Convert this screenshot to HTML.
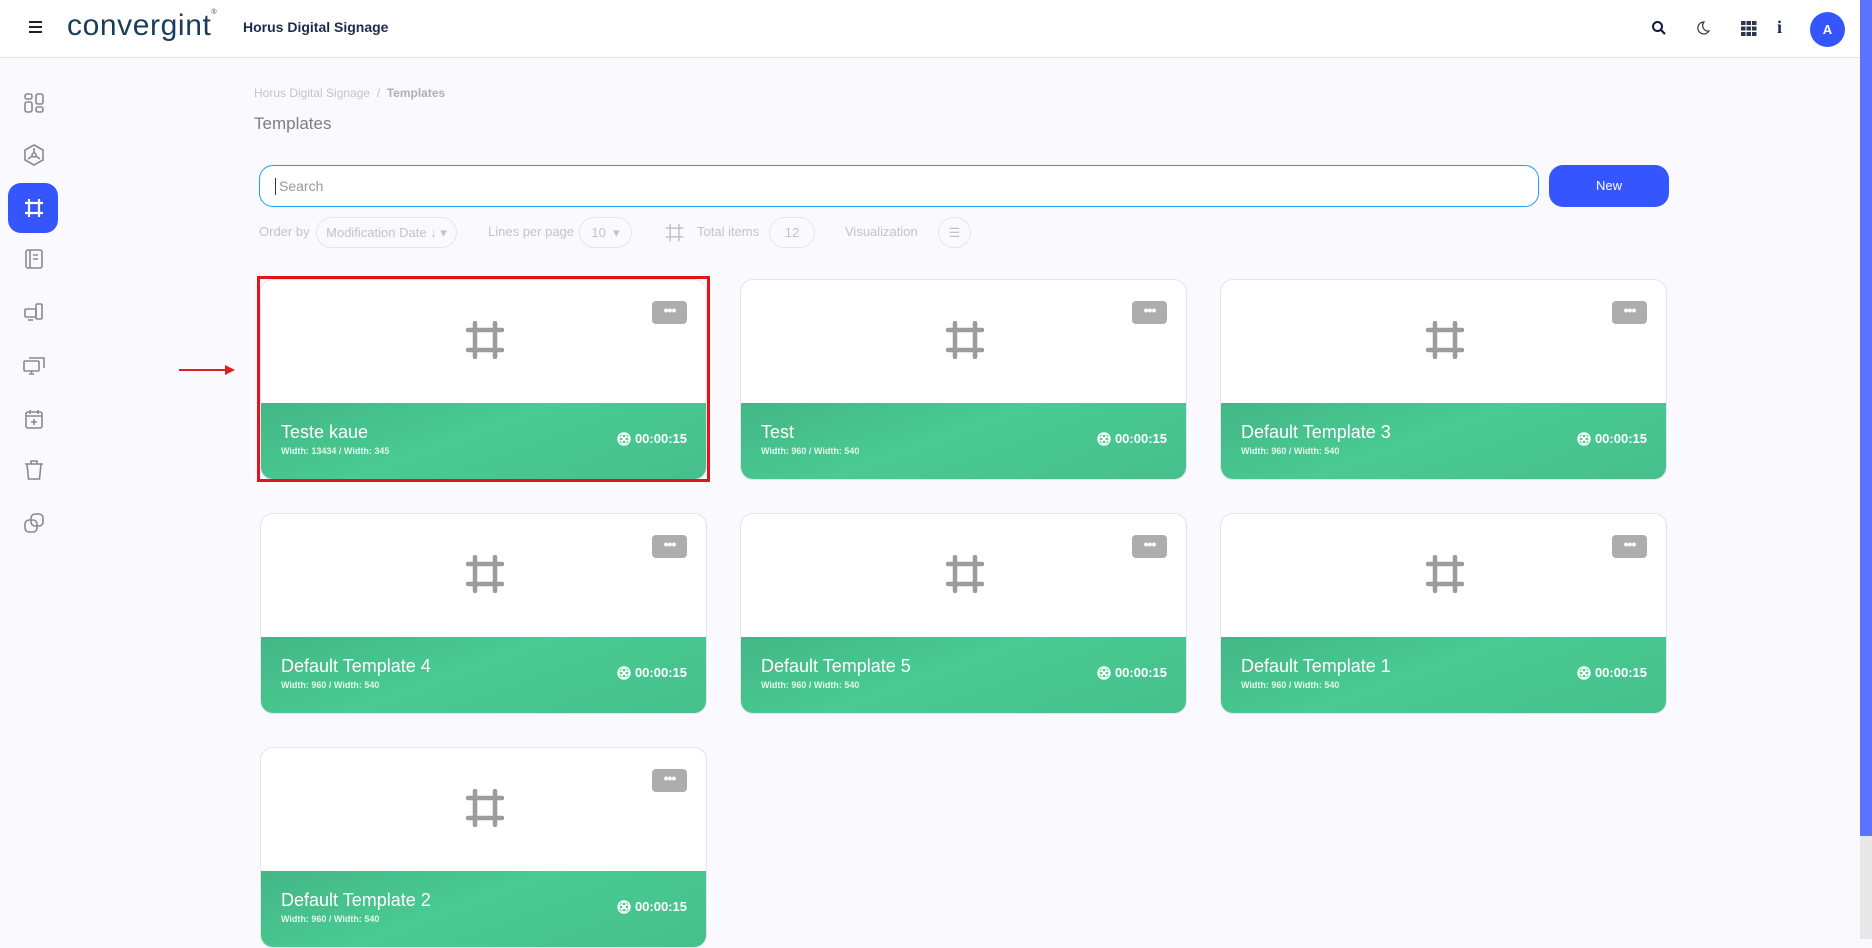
<!DOCTYPE html>
<html><head><meta charset="utf-8"><style>
*{box-sizing:border-box;margin:0;padding:0}
body{width:1872px;height:939px;overflow:hidden;background:#f9f9fe;font-family:"Liberation Sans",Arial,sans-serif;position:relative}
.hdr{position:absolute;left:0;top:0;width:1860px;height:58px;background:#fff;border-bottom:1px solid #e6e6ec}
.side{position:absolute;left:0;top:58px;width:68px;height:881px;background:#f9f9fe}
.sb{position:absolute;right:0;top:0;width:12px;height:939px;background:#e8e8e8}
.sb i{position:absolute;left:0;top:0;width:12px;height:836px;background:#5b73ff}
.ic{position:absolute;left:22px;width:24px;height:24px}
.card{position:absolute;width:447px;height:201px;background:#fff;border:1px solid #e4e4ea;border-radius:13px;overflow:hidden}
.card .g{position:absolute;left:0;bottom:0;width:100%;height:76px;background:linear-gradient(160deg,#43b685 0%,#49cb93 45%,#46c08c 100%)}
.card .t{position:absolute;left:20px;top:19px;color:#fff;font-size:18px}
.card .s{position:absolute;left:20px;top:43px;color:#e3f7ec;font-size:9px;font-weight:bold}
.card .d{position:absolute;right:19px;top:28px;color:#fff;font-size:13px;font-weight:bold;display:flex;align-items:center;gap:4px}
.card .m{position:absolute;right:19px;top:21px;width:35px;height:23px;background:#adadad;border-radius:4px;color:#fff;text-align:center;font-size:14px;line-height:19px;font-weight:bold;letter-spacing:-1px}
.card svg.cr{position:absolute;left:205px;top:41px}
.lbl{position:absolute;top:224px;color:#c4c4c8;font-size:13px}
.pill{position:absolute;top:217px;height:31px;border:1px solid #e6e6ea;border-radius:16px;color:#c4c4c8;font-size:13px;line-height:29px;text-align:center}
</style></head><body>
<div class="hdr">
 <div style="position:absolute;left:29px;top:21px;width:13px;height:2px;background:#222;box-shadow:0 5px 0 #222,0 10px 0 #222"></div>
 <div style="position:absolute;left:67px;top:9px;font-size:30px;color:#1b3d5a;letter-spacing:0.6px">convergint<span style="font-size:7px;vertical-align:top">®</span></div>
 <div style="position:absolute;left:243px;top:19px;font-size:14px;font-weight:bold;color:#1c2b4a">Horus Digital Signage</div>
 <svg style="position:absolute;left:1651px;top:20px" width="16" height="16" viewBox="0 0 16 16"><circle cx="6.5" cy="6.5" r="4.5" fill="none" stroke="#111a3a" stroke-width="2"/><path d="M10 10l4 4" stroke="#111a3a" stroke-width="2.2"/></svg>
 <svg style="position:absolute;left:1695px;top:20px" width="16" height="16" viewBox="0 0 16 16"><path d="M9 2a6 6 0 1 0 5 9A5.5 5.5 0 0 1 9 2z" fill="none" stroke="#333" stroke-width="1.2"/></svg>
 <svg style="position:absolute;left:1741px;top:21px" width="16" height="15" viewBox="0 0 16 15"><g fill="#2a3550"><rect x="0" y="0" width="4.5" height="4"/><rect x="5.5" y="0" width="4.5" height="4"/><rect x="11" y="0" width="4.5" height="4"/><rect x="0" y="5.5" width="4.5" height="4"/><rect x="5.5" y="5.5" width="4.5" height="4"/><rect x="11" y="5.5" width="4.5" height="4"/><rect x="0" y="11" width="4.5" height="4"/><rect x="5.5" y="11" width="4.5" height="4"/><rect x="11" y="11" width="4.5" height="4"/></g></svg>
 <div style="position:absolute;left:1777px;top:17px;font-size:18px;font-weight:bold;color:#1c2b4a;font-family:'Liberation Serif',serif">i</div>
 <div style="position:absolute;left:1810px;top:12px;width:35px;height:35px;border-radius:50%;background:#3555ff;color:#fff;font-weight:bold;font-size:13px;text-align:center;line-height:35px">A</div>
</div>
<div class="side">
 <svg class="ic" style="top:33px" viewBox="0 0 24 24" fill="none" stroke="#8a8a8a" stroke-width="1.6"><rect x="3" y="3" width="7" height="5" rx="2"/><rect x="3" y="11" width="7" height="10" rx="2"/><rect x="14" y="3" width="7" height="10" rx="2"/><rect x="14" y="16" width="7" height="5" rx="2"/></svg>
 <svg class="ic" style="top:85px" viewBox="0 0 24 24" fill="none" stroke="#8a8a8a" stroke-width="1.6"><path d="M12 2l9 5v10l-9 5-9-5V7z"/><circle cx="12" cy="12" r="2"/><path d="M12 10V5M10.3 13l-4.3 3M13.7 13l4.3 3"/></svg>
 <div style="position:absolute;left:8px;top:125px;width:50px;height:50px;border-radius:13px;background:#3555ff"></div>
 <svg class="ic" style="top:138px" viewBox="0 0 24 24" fill="none" stroke="#fff" stroke-width="2.2"><path d="M7 3v18M17 3v18M3 7h18M3 17h18"/></svg>
 <svg class="ic" style="top:189px" viewBox="0 0 24 24" fill="none" stroke="#8a8a8a" stroke-width="1.6"><rect x="4" y="3" width="16" height="18" rx="2"/><path d="M8 3v18M11 8h5M11 12h5"/></svg>
 <svg class="ic" style="top:243px" viewBox="0 0 24 24" fill="none" stroke="#8a8a8a" stroke-width="1.6"><rect x="3" y="8" width="11" height="8" rx="1"/><rect x="14" y="3" width="6" height="15" rx="1"/><path d="M6 19h5"/></svg>
 <svg class="ic" style="top:295px" viewBox="0 0 24 24" fill="none" stroke="#8a8a8a" stroke-width="1.6"><rect x="2" y="8" width="15" height="10" rx="1"/><path d="M7 5h15v10M7 21h5M9.5 18v3"/></svg>
 <svg class="ic" style="top:349px" viewBox="0 0 24 24" fill="none" stroke="#8a8a8a" stroke-width="1.6"><rect x="4" y="5" width="16" height="16" rx="2"/><path d="M4 9h16M8 3v4M16 3v4M12 12v6M9 15h6"/></svg>
 <svg class="ic" style="top:400px" viewBox="0 0 24 24" fill="none" stroke="#8a8a8a" stroke-width="1.6"><path d="M3 6h18M9 6V3h6v3M5 6l1.5 15h11L19 6"/></svg>
 <svg class="ic" style="top:453px" viewBox="0 0 24 24" fill="none" stroke="#8a8a8a" stroke-width="1.6"><rect x="9" y="3" width="12" height="12" rx="4"/><rect x="3" y="9" width="12" height="12" rx="4"/></svg>
</div>
<div class="sb"><i></i></div>

<div style="position:absolute;left:254px;top:86px;font-size:12px;color:#c4c4c8">Horus Digital Signage &nbsp;/&nbsp; <b style="color:#b0b0b4">Templates</b></div>
<div style="position:absolute;left:254px;top:114px;font-size:17px;color:#7d7d82">Templates</div>
<div style="position:absolute;left:259px;top:165px;width:1280px;height:42px;border:1px solid #1e9ef5;border-radius:14px;background:#fff"><span style="position:absolute;left:15px;top:12px;width:1px;height:17px;background:#333"></span><span style="position:absolute;left:19px;top:12px;font-size:14px;color:#9a9a9e">Search</span></div>
<div style="position:absolute;left:1549px;top:165px;width:120px;height:42px;border-radius:14px;background:#3555ff;color:#fff;font-size:13px;text-align:center;line-height:42px">New</div>

<div class="lbl" style="left:259px">Order by</div>
<div class="pill" style="left:316px;width:141px">Modification Date ↓ ▾</div>
<div class="lbl" style="left:488px">Lines per page</div>
<div class="pill" style="left:579px;width:53px">10 &nbsp;▾</div>
<svg style="position:absolute;left:664px;top:222px" width="21" height="21" viewBox="0 0 24 24" fill="none" stroke="#c4c4c8" stroke-width="1.8"><path d="M7 2v20M17 2v20M2 7h20M2 17h20"/></svg>
<div class="lbl" style="left:697px">Total items</div>
<div class="pill" style="left:769px;width:46px">12</div>
<div class="lbl" style="left:845px">Visualization</div>
<div class="pill" style="left:938px;width:33px">☰</div>

<div style="position:absolute;left:179px;top:369px;width:48px;height:2px;background:#e02020"></div>
<div style="position:absolute;left:225px;top:365px;border-left:10px solid #e02020;border-top:5px solid transparent;border-bottom:5px solid transparent"></div>

<div id="cards"></div>
<div style="position:absolute;left:257px;top:276px;width:453px;height:206px;border:3px solid #e3141b;z-index:5"></div>
<script>
var d=[["Teste kaue","Width: 13434 / Width: 345"],["Test","Width: 960 / Width: 540"],["Default Template 3","Width: 960 / Width: 540"],["Default Template 4","Width: 960 / Width: 540"],["Default Template 5","Width: 960 / Width: 540"],["Default Template 1","Width: 960 / Width: 540"],["Default Template 2","Width: 960 / Width: 540"]];
var h="";d.forEach(function(c,i){var x=260+(i%3)*480,y=279+Math.floor(i/3)*234;
h+='<div class="card" style="left:'+x+'px;top:'+y+'px"><div class="m">•••</div><svg class="cr" width="38" height="38" viewBox="0 0 38 38" fill="none" stroke="#9c9c9c" stroke-width="4.5" stroke-linecap="round"><path d="M9 2v34M29 2v34M2 9h34M2 29h34"/></svg><div class="g"><div class="t">'+c[0]+'</div><div class="s">'+c[1]+'</div><div class="d"><svg width="14" height="14" viewBox="0 0 14 14" fill="none" stroke="#fff" stroke-width="1.4"><circle cx="7" cy="7" r="6"/><circle cx="7" cy="4" r="2"/><circle cx="7" cy="10" r="2"/><circle cx="4" cy="7" r="2"/><circle cx="10" cy="7" r="2"/></svg>00:00:15</div></div></div>';});
document.getElementById("cards").innerHTML=h;
</script>
</body></html>
